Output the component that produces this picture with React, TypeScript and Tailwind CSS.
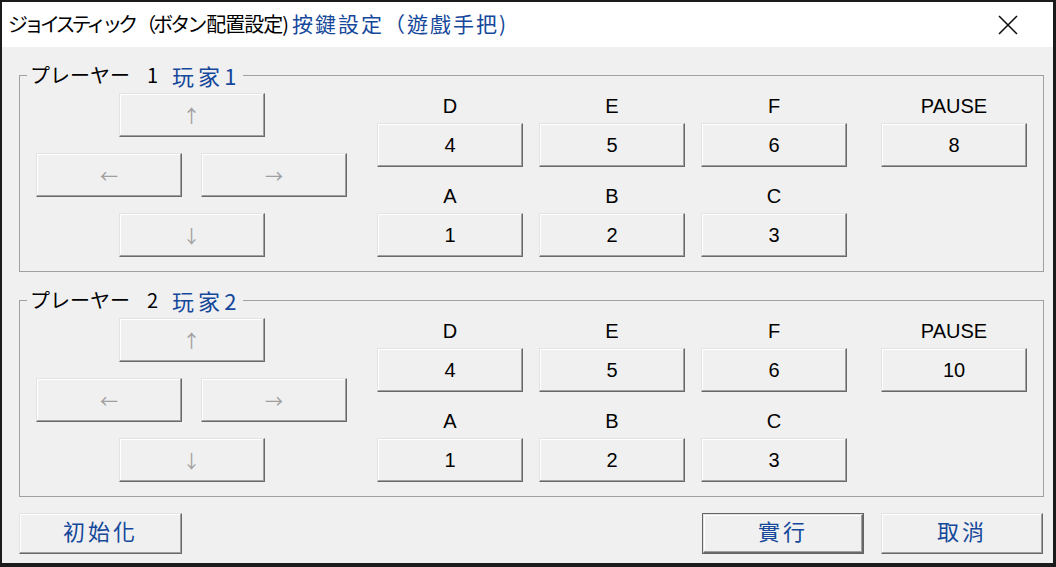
import React from "react"

const jp = "font-['Noto_Sans_CJK_JP',sans-serif]"
const tc = "font-['Noto_Sans_CJK_TC',sans-serif]"
const latin = "font-['Liberation_Sans',Arial,sans-serif]"
const blue = "text-[#15489b]"

const btn =
    "bg-[#f0f0f0] border border-t-[#e3e3e3] border-l-[#e3e3e3] border-b-[#696969] border-r-[#696969] shadow-[inset_-1px_-1px_#a0a0a0,inset_1px_1px_#ffffff] flex items-center justify-center"

function ArrowBtn({ glyph }: { glyph: string }) {
    return (
        <div className={`${btn} w-[146px] h-[44px] text-[#a0a0a0] text-[18px] ${jp}`}>
            {glyph}
        </div>
    )
}

function KeyCell({ label, value }: { label: string; value: string }) {
    return (
        <div className="flex flex-col items-center w-[146px]">
            <span className={`${latin} text-[20px] leading-[20px] text-black mb-[7px]`}>{label}</span>
            <div className={`${btn} w-[146px] h-[44px] ${latin} text-[20px] text-black`}>{value}</div>
        </div>
    )
}

function PlayerGroup({ n, pause }: { n: number; pause: string }) {
    return (
        <fieldset className="border border-[#a0a0a0] w-[1023px] px-[16px] pt-[6px] pb-[14px] m-0">
            <legend className="-ml-[9px] px-[3px] h-[24px] flex items-center whitespace-nowrap">
                <span className={`${jp} text-black text-[20px] leading-[24px]`}>プレーヤー<span className="ml-[17px]">{n}</span></span>
                <span className={`${tc} ${blue} text-[22px] leading-[24px] ml-[14px] tracking-[4px]`}>玩家{n}</span>
            </legend>
            <div className="flex gap-[30px]">
                {/* directions */}
                <div className="flex flex-col items-center gap-[16px] w-[311px]">
                    <ArrowBtn glyph="↑" />
                    <div className="flex gap-[19px]">
                        <ArrowBtn glyph="←" />
                        <ArrowBtn glyph="→" />
                    </div>
                    <ArrowBtn glyph="↓" />
                </div>
                {/* buttons */}
                <div className="flex flex-col mt-[3px] gap-[19px]">
                    <div className="flex gap-[16px]">
                        <KeyCell label="D" value="4" />
                        <KeyCell label="E" value="5" />
                        <KeyCell label="F" value="6" />
                        <div className="ml-[18px]">
                            <KeyCell label="PAUSE" value={pause} />
                        </div>
                    </div>
                    <div className="flex gap-[16px]">
                        <KeyCell label="A" value="1" />
                        <KeyCell label="B" value="2" />
                        <KeyCell label="C" value="3" />
                    </div>
                </div>
            </div>
        </fieldset>
    )
}

export default function App() {
    return (
        <div className="w-[1056px] h-[567px] bg-[#1b1b1b] pl-[2px] pt-[2px] pr-[3px] pb-[4px] flex flex-col overflow-hidden">
            {/* Title bar */}
            <div className="h-[45px] bg-white flex items-center justify-between pl-[6px] shrink-0">
                <div className="leading-none whitespace-nowrap pb-[3px] flex items-baseline">
                    <span className={`${jp} text-black text-[20px] tracking-[-4px]`}>ジョイスティック</span>
                    <span className={`${jp} text-black text-[20px] tracking-[-3px] ml-[2px]`}>（ボタン</span>
                    <span className={`${jp} text-black text-[20px] tracking-[-1px] ml-[2px]`}>配置設定)</span>
                    <span className={`${tc} ${blue} text-[21px] tracking-[2px] ml-[4px]`}>按鍵設定（遊戲手把)</span>
                </div>
                <div className="w-[46px] h-[45px] flex items-center justify-center mr-[22px]">
                    <svg width="20" height="20" viewBox="0 0 20 20">
                        <path d="M1 1 L19 19 M19 1 L1 19" stroke="#111" strokeWidth="1.6" fill="none" />
                    </svg>
                </div>
            </div>

            {/* Body */}
            <div className="flex-1 bg-[#f0f0f0] pl-[17px] pt-[16px] flex flex-col">
                <PlayerGroup n={1} pause="8" />
                <div className="h-[16px]" />
                <PlayerGroup n={2} pause="10" />

                <div className="flex mt-[16px] w-[1024px]">
                    <div className={`${btn} w-[163px] h-[41px] pb-[7px] leading-none ${tc} ${blue} text-[22px] tracking-[3px]`}>初始化</div>
                    <div className="ml-auto border border-[#646464] w-[162px] h-[41px] flex">
                        <div className={`${btn} flex-1 pb-[7px] leading-none ${tc} ${blue} text-[22px] tracking-[3px]`}>實行</div>
                    </div>
                    <div className={`${btn} ml-[17px] w-[162px] h-[41px] pb-[7px] leading-none ${tc} ${blue} text-[22px] tracking-[3px]`}>取消</div>
                </div>
            </div>
        </div>
    )
}
